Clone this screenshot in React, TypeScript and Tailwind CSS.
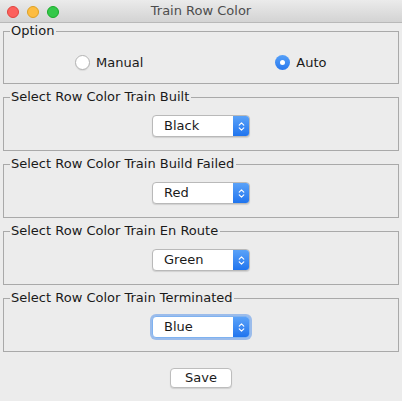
import { ChevronsUpDown } from "lucide-react";

const font = { fontFamily: '"DejaVu Sans", "Noto Sans", sans-serif' };

// mac-style popup button
const Combo = ({ value, focused }: { value: string; focused?: boolean }) => (
  <div
    className={`flex h-[22px] w-[98px] items-stretch rounded-[4px] bg-white ${
      focused
        ? "border border-[#7fb2f0] shadow-[0_0_0_2px_rgba(90,150,235,0.55)]"
        : "border border-[#b9b9b9] shadow-[0_1px_1px_rgba(0,0,0,0.12)]"
    }`}
  >
    <span className="flex-1 pl-[11px] text-[13px] leading-[20px] text-[#1a1a1a]">{value}</span>
    <span className="flex w-[16px] items-center justify-center rounded-r-[3px] bg-gradient-to-b from-[#5aa2f8] to-[#1f74ee]">
      <ChevronsUpDown size={11} strokeWidth={2.5} className="text-white" />
    </span>
  </div>
);

const Panel = ({ title, children }: { title: string; children: React.ReactNode }) => (
  <fieldset className="mx-[3px] border border-[#a9a9a9]">
    <legend className="ml-[6px] pr-[2px] pl-[1px] text-[13px] leading-[16px] text-[#1a1a1a]">{title}</legend>
    {children}
  </fieldset>
);

const Radio = ({ label, checked }: { label: string; checked?: boolean }) => (
  <div className="flex items-center gap-[6px]">
    {checked ? (
      <span className="flex h-[15px] w-[15px] items-center justify-center rounded-full bg-gradient-to-b from-[#56a0f8] to-[#2778ee]">
        <span className="h-[5px] w-[5px] rounded-full bg-white" />
      </span>
    ) : (
      <span className="h-[15px] w-[15px] rounded-full border border-[#b3b3b3] bg-white shadow-[0_1px_1px_rgba(0,0,0,0.08)]" />
    )}
    <span className="text-[13px] leading-[16px] text-[#1a1a1a]">{label}</span>
  </div>
);

const rows = [
  { title: "Select Row Color Train Built", value: "Black" },
  { title: "Select Row Color Train Build Failed", value: "Red" },
  { title: "Select Row Color Train En Route", value: "Green" },
  { title: "Select Row Color Train Terminated", value: "Blue", focused: true },
];

export default function App() {
  return (
    <div className="h-[401px] w-[402px] overflow-hidden bg-[#ececec]" style={font}>
      {/* title bar */}
      <div className="relative flex h-[23px] items-center justify-center border-b border-[#b8b8b8] bg-gradient-to-b from-[#ebebeb] to-[#d3d3d3]">
        <div className="absolute left-[7px] top-[6px] flex gap-[8px]">
          <span className="h-[12px] w-[12px] rounded-full border border-[#e0443e] bg-[#fc605c]" />
          <span className="h-[12px] w-[12px] rounded-full border border-[#dea123] bg-[#fdbc40]" />
          <span className="h-[12px] w-[12px] rounded-full border border-[#1aab29] bg-[#34c84a]" />
        </div>
        <span className="text-[13px] text-[#4d4d4d]">Train Row Color</span>
      </div>

      <div className="flex flex-col gap-[5px]">
        <Panel title="Option">
          <div className="flex h-[44px] items-center pt-[3px]">
            <div className="ml-[71px]">
              <Radio label="Manual" />
            </div>
            <div className="ml-[132px]">
              <Radio label="Auto" checked />
            </div>
          </div>
        </Panel>

        {rows.map((r) => (
          <Panel key={r.title} title={r.title}>
            <div className="flex justify-center pt-[10px] pb-[13px]">
              <Combo value={r.value} focused={r.focused} />
            </div>
          </Panel>
        ))}

        <div className="flex justify-center pt-[11px]">
          <button className="h-[20px] w-[62px] rounded-[4px] border border-[#bdbdbd] bg-white text-[13px] leading-[18px] text-[#1a1a1a] shadow-[0_1px_1px_rgba(0,0,0,0.12)]">
            Save
          </button>
        </div>
      </div>
    </div>
  );
}
